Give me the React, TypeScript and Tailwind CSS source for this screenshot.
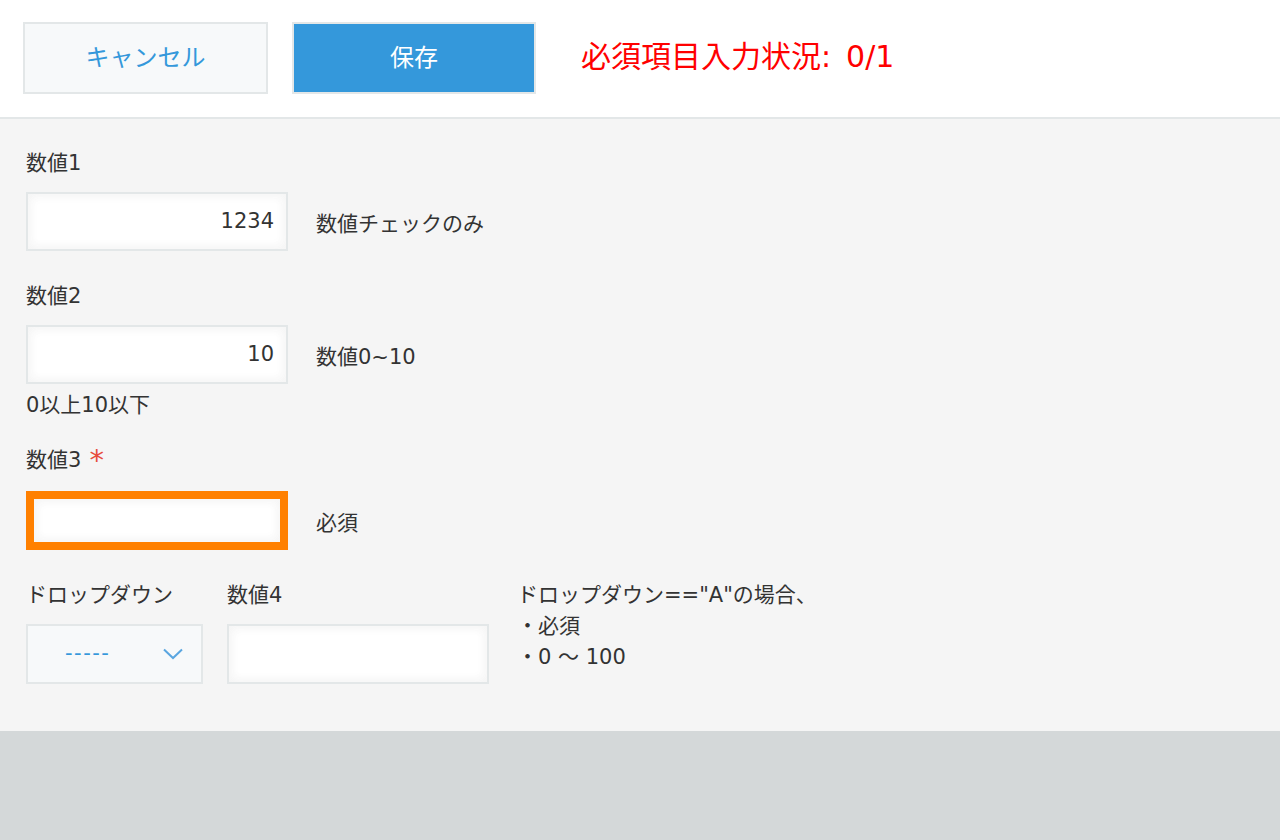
import React from "react";

const font = { fontFamily: '"DejaVu Sans", "Noto Sans CJK JP", sans-serif' };

function NumberInput({ value, required }: { value?: string; required?: boolean }) {
  if (required) {
    return (
      <div className="w-[262px] h-[59px] border-8 border-[#ff8000] bg-white shadow-[inset_1px_1px_12px_#f5f5f5,inset_-1px_-1px_12px_#f5f5f5]" />
    );
  }
  return (
    <div className="w-[262px] h-[59px] border-2 border-[#e3e7e8] bg-white shadow-[inset_1px_1px_12px_#f5f5f5,inset_-1px_-1px_12px_#f5f5f5] flex items-center justify-end pr-[12px] text-[21px] text-[#333]">
      {value}
    </div>
  );
}

function Label({ children }: { children: React.ReactNode }) {
  return <div className="h-[30px] leading-[30px] text-[21px] text-[#333] whitespace-nowrap">{children}</div>;
}

export default function App() {
  return (
    <div className="min-h-[840px] bg-[#d4d8d9]" style={font}>
      <header className="h-[119px] bg-white border-b-2 border-[#e3e7e8] flex items-start pt-[22px] pl-[23px]">
        <button className="w-[245px] h-[72px] border-2 border-[#e3e7e8] bg-[#f7f9fa] text-[#3498db] text-[24px]">
          キャンセル
        </button>
        <button className="ml-[24px] w-[244px] h-[72px] border-2 border-[#e3e7e8] bg-[#3498db] text-white text-[24px]">
          保存
        </button>
        <div className="ml-[45px] h-[68px] flex items-center text-[30px] text-[#ff0000] whitespace-nowrap">
          必須項目入力状況:<span className="ml-[15px]"> 0/1</span>
        </div>
      </header>

      <main className="bg-[#f5f5f5] pl-[26px] pt-[29px] pb-[47px]">
        {/* 数値1 */}
        <Label>数値1</Label>
        <div className="flex items-center mt-[14px]">
          <NumberInput value="1234" />
          <span className="ml-[28px] mt-[6px] text-[21px] text-[#333]">数値チェックのみ</span>
        </div>

        {/* 数値2 */}
        <div className="mt-[30px]">
          <Label>数値2</Label>
        </div>
        <div className="flex items-center mt-[14px]">
          <NumberInput value="10" />
          <span className="ml-[28px] mt-[6px] text-[21px] text-[#333]">数値0~10</span>
        </div>
        <div className="mt-[6px]">
          <Label>0以上10以下</Label>
        </div>

        {/* 数値3 */}
        <div className="mt-[25px] flex items-center h-[30px]">
          <Label>数値3</Label>
          <span className="ml-[8px] text-[29px] leading-[30px] text-[#e74c3c]">*</span>
        </div>
        <div className="flex items-center mt-[16px]">
          <NumberInput required />
          <span className="ml-[28px] mt-[6px] text-[21px] text-[#333]">必須</span>
        </div>

        {/* ドロップダウン / 数値4 */}
        <div className="mt-[30px] flex items-start">
          <div>
            <Label>ドロップダウン</Label>
            <div className="mt-[14px] w-[177px] h-[60px] border-2 border-[#e3e7e8] bg-[#f7f9fa] flex items-center pl-[37px] pr-[18px]">
              <span className="text-[21px] text-[#3498db] tracking-[1.5px]">-----</span>
              <svg className="ml-auto" width="20" height="12" viewBox="0 0 20 12" fill="none">
                <path d="M1 1.5 L10 10 L19 1.5" stroke="#5aa6e0" strokeWidth="2" />
              </svg>
            </div>
          </div>
          <div className="ml-[24px]">
            <Label>数値4</Label>
            <div className="mt-[14px]">
              <div className="w-[262px] h-[60px] border-2 border-[#e3e7e8] bg-white shadow-[inset_1px_1px_12px_#f5f5f5,inset_-1px_-1px_12px_#f5f5f5]" />
            </div>
          </div>
          <div className="ml-[28px] text-[21px] leading-[31px] text-[#333] whitespace-nowrap">
            <div>ドロップダウン=="A"の場合、</div>
            <div>・必須</div>
            <div>・0 〜 100</div>
          </div>
        </div>
      </main>
    </div>
  );
}
